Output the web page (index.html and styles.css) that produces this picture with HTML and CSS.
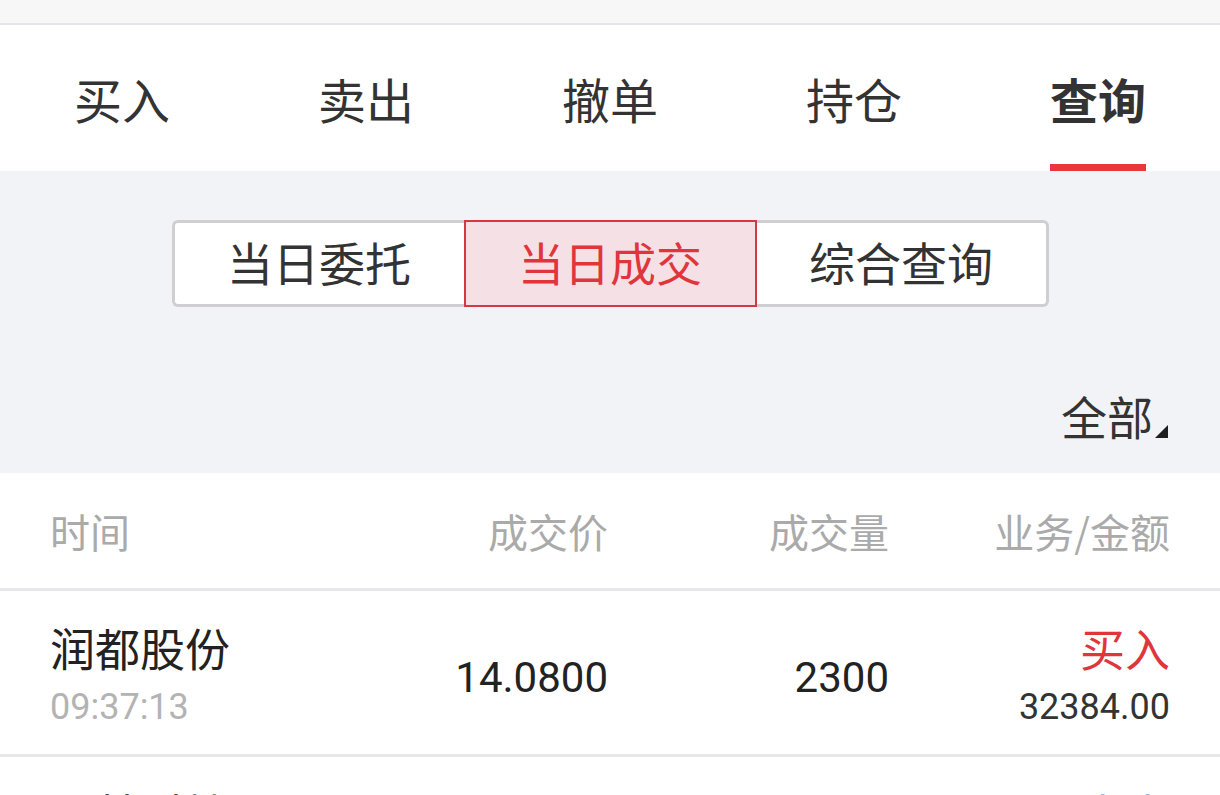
FILE: index.html
```html
<!DOCTYPE html>
<html lang="zh-CN">
<head>
<meta charset="utf-8">
<title>查询</title>
<link rel="stylesheet" href="styles.css">
</head>
<body>
<div class="statusbar"></div>
<nav class="tabs">
  <div class="tab"><span class="tab-label">买入</span></div>
  <div class="tab"><span class="tab-label">卖出</span></div>
  <div class="tab"><span class="tab-label">撤单</span></div>
  <div class="tab"><span class="tab-label">持仓</span></div>
  <div class="tab active"><span class="tab-label">查询</span></div>
</nav>
<section class="filter">
  <div class="segments">
    <div class="seg seg-first">当日委托</div>
    <div class="seg seg-active">当日成交</div>
    <div class="seg seg-last">综合查询</div>
  </div>
  <div class="scope">
    <span class="scope-label">全部</span>
    <svg class="scope-tri" width="13" height="13" viewBox="0 0 13 13"><polygon points="13,0 13,13 0,13" fill="#1e1e1e"/></svg>
  </div>
</section>
<section class="list">
  <div class="row head">
    <div class="cell">时间</div>
    <div class="cell r">成交价</div>
    <div class="cell r">成交量</div>
    <div class="cell r">业务/金额</div>
  </div>
  <div class="row item">
    <div class="cell">
      <div class="name">润都股份</div>
      <div class="time">09:37:13</div>
    </div>
    <div class="cell r num">14.0800</div>
    <div class="cell r num">2300</div>
    <div class="cell r">
      <div class="name buy">买入</div>
      <div class="amount">32384.00</div>
    </div>
  </div>
  <div class="row item">
    <div class="cell">
      <div class="name">国林科技</div>
      <div class="time">09:35:02</div>
    </div>
    <div class="cell r num">21.5600</div>
    <div class="cell r num">1000</div>
    <div class="cell r">
      <div class="name sell">卖出</div>
      <div class="amount">21560.00</div>
    </div>
  </div>
</section>
</body>
</html>
```

FILE: styles.css
```css
html, body {
  margin: 0;
  padding: 0;
  background: #ffffff;
  font-family: "Noto Sans CJK SC", "Noto Sans", sans-serif;
  overflow: hidden;
}

.statusbar {
  height: 23px;
  background: #f7f7f7;
  border-bottom: 2px solid #e4e4e9;
}

.tabs {
  display: grid;
  grid-template-columns: repeat(5, 1fr);
  height: 146px;
  background: #ffffff;
}

.tab {
  display: flex;
  justify-content: center;
  align-items: flex-end;
}

.tab-label {
  display: block;
  font-size: 48px;
  line-height: 56px;
  color: #333333;
  padding-bottom: 38px;
  border-bottom: 7px solid transparent;
}

.tab.active .tab-label {
  font-weight: 700;
  border-bottom-color: #e8383d;
}

.filter {
  background: #f2f3f7;
  padding-top: 49px;
  padding-bottom: 28px;
}

.segments {
  display: grid;
  grid-template-columns: 292px 293px 292px;
  justify-content: center;
  height: 87px;
}

.seg {
  box-sizing: border-box;
  display: flex;
  align-items: center;
  justify-content: center;
  font-size: 46px;
  color: #333333;
  background: #ffffff;
  border: 3px solid #cfcfd1;
  padding-bottom: 6px;
}

.seg-first {
  border-right: 0;
  border-radius: 6px 0 0 6px;
}

.seg-last {
  border-left: 0;
  border-radius: 0 6px 6px 0;
}

.seg-active {
  border: 2px solid #d3393f;
  background: #f5e1e5;
  color: #e0353b;
}

.scope {
  display: flex;
  justify-content: flex-end;
  align-items: flex-end;
  margin-top: 80px;
  padding-right: 52px;
  height: 56px;
  padding-bottom: 2px;
}

.scope-label {
  font-size: 46px;
  line-height: 56px;
  color: #333333;
}

.scope-tri {
  display: block;
  margin-left: 2px;
  margin-bottom: 5px;
}

.list {
  background: #ffffff;
}

.row {
  display: grid;
  grid-template-columns: 278px 280px 281px 281px;
  padding: 0 50px;
  border-bottom: 3px solid #e6e6eb;
}

.row.head {
  height: 115px;
  align-items: center;
  font-size: 40px;
  color: #aaaaaa;
}

.cell.r {
  text-align: right;
}

.row.item {
  height: 163px;
  align-items: start;
}

.row.item > .cell {
  padding-top: 29px;
}

.name {
  font-size: 45px;
  line-height: 56px;
  color: #222222;
}

.name.buy {
  color: #e0353b;
}

.name.sell {
  color: #3a86e0;
}

.time,
.amount {
  font-family: Roboto, "Noto Sans", sans-serif;
  font-size: 36px;
  line-height: 44px;
  margin-top: 9px;
}

.time {
  color: #b3b3b3;
}

.amount {
  color: #333333;
}

.row.item > .cell.num {
  padding-top: 62px;
  font-family: Roboto, "Noto Sans", sans-serif;
  font-size: 42px;
  line-height: 50px;
  color: #222222;
}
```
